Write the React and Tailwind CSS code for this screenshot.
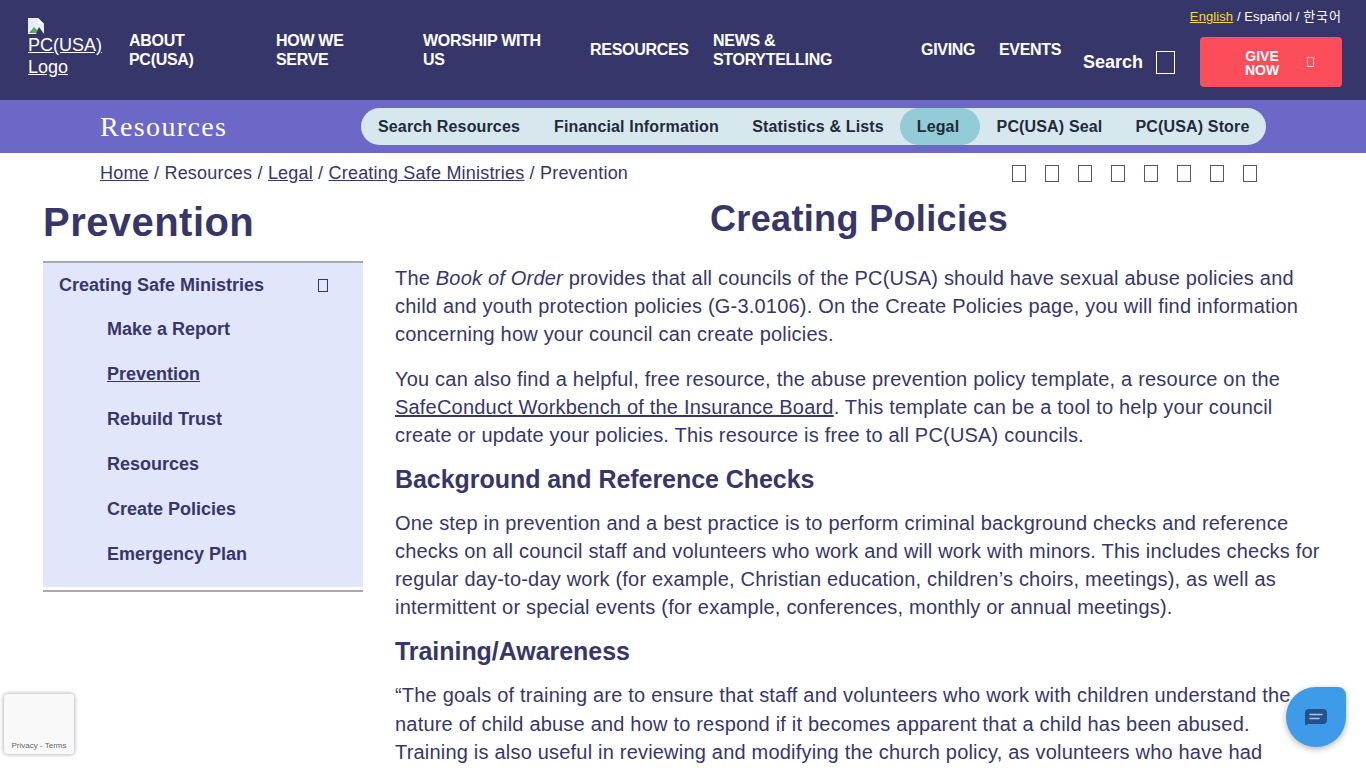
const navItems = [
  { label: ['ABOUT', 'PC(USA)'], width: 'w-[147px]' },
  { label: ['HOW WE', 'SERVE'], width: 'w-[147px]' },
  { label: ['WORSHIP WITH', 'US'], width: 'w-[167px]' },
  { label: ['RESOURCES'], width: 'w-[123px]' },
  { label: ['NEWS &', 'STORYTELLING'], width: 'w-[208px]' },
  { label: ['GIVING'], width: 'w-[78px]' },
  { label: ['EVENTS'], width: 'w-[85px]' },
];

const subNav = [
  { label: 'Search Resources', width: 'w-[176px]' },
  { label: 'Financial Information', width: 'w-[199px]' },
  { label: 'Statistics & Lists', width: 'w-[164px]' },
  { label: 'Legal', width: 'w-[80px]', active: true },
  { label: 'PC(USA) Seal', width: 'w-[139px]' },
  { label: 'PC(USA) Store', width: 'w-[147px]' },
];

const sideLinks = ['Make a Report', 'Prevention', 'Rebuild Trust', 'Resources', 'Create Policies', 'Emergency Plan'];

function Tofu({ className }) {
  return <span className={`inline-block shrink-0 border ${className}`} />;
}

function BrokenImage() {
  return (
    <svg width="16" height="16" viewBox="0 0 16 16" className="block">
      <path d="M0 0h10l6 6v10H0z" fill="#e8eef7" />
      <path d="M10 0l6 6h-6z" fill="#ffffff" />
      <path d="M1 15l5-6 3 3 3-2v5z" fill="#5fa55a" />
      <path d="M11 9l5 7H8z" fill="#37366b" />
    </svg>
  );
}

export default function App() {
  return (
    <div className="relative h-[768px] overflow-hidden bg-white font-['Liberation_Sans',Arial,sans-serif] text-[#37366b]">
      <header className="flex h-[100px] bg-[#37366b] text-white">
        <a href="#" className="ml-[28px] mt-[18px] w-[101px] text-[18px] leading-[22px] underline">
          <BrokenImage />
          <span className="block">PC(USA)</span>
          <span className="block">Logo</span>
        </a>
        <nav className="flex h-full items-center pb-[2px]">
          {navItems.map((item) => (
            <div
              key={item.label[0]}
              className={`${item.width} text-[16px] font-bold leading-[19px] tracking-[-0.3px] ${item.label.length > 1 ? 'mt-[2px]' : ''}`}
            >
              {item.label.map((line) => (
                <div key={line}>{line}</div>
              ))}
            </div>
          ))}
        </nav>
        <div className="ml-[-1px] flex flex-col">
          <div className="mt-[8px] h-[29px] text-right text-[13px] leading-[16px] tracking-[0.1px]">
            <a href="#" className="text-[#f5d742] underline">English</a>
            {' / Español / '}
            <span className="font-['Noto_Sans_CJK_KR',sans-serif] tracking-[1px]">한국어</span>
          </div>
          <div className="flex items-center">
            <span className="text-[18px] font-bold">Search</span>
            <Tofu className="ml-[13px] h-[23px] w-[19px] border-white" />
            <a href="#" className="ml-[25px] flex h-[50px] w-[142px] items-center rounded-[4px] bg-[#fb4d5a] text-[14px] font-bold leading-[14px]">
              <span className="ml-[40px] w-[44px] pt-[1px] text-center">GIVE<br />NOW</span>
              <Tofu className="ml-[23px] h-[10px] w-[7px] border-[#ffd5d8]" />
            </a>
          </div>
        </div>
      </header>

      <div className="flex h-[53px] items-center bg-[#6b68c8]">
        <div className="ml-[100px] w-[261px] font-['Liberation_Serif',serif] text-[28px] tracking-[1.35px] text-white">Resources</div>
        <div className="flex h-[37px] w-[905px] rounded-full bg-[#d7e7ee] text-[16px] font-bold tracking-[0.15px] text-[#1f2a3a]">
          {subNav.map((item) => (
            <a
              key={item.label}
              href="#"
              className={`flex items-center justify-center rounded-full ${item.width} ${item.active ? 'bg-[#93cbd6] pr-[4px]' : ''}`}
            >
              {item.label}
            </a>
          ))}
        </div>
      </div>

      <div className="flex h-[40px] items-center text-[18px] tracking-[0.2px]">
        <div className="ml-[100px] w-[912px]">
          <a href="#" className="underline">Home</a>
          {' / Resources / '}
          <a href="#" className="underline">Legal</a>
          {' / '}
          <a href="#" className="underline">Creating Safe Ministries</a>
          {' / Prevention'}
        </div>
        <div className="flex gap-[19px]">
          {[0, 1, 2, 3, 4, 5, 6, 7].map((n) => (
            <Tofu key={n} className="h-[17px] w-[14px] border-[#55556f]" />
          ))}
        </div>
      </div>

      <div className="flex">
        <aside className="ml-[43px] w-[320px] shrink-0">
          <h1 className="mt-[5px] h-[63px] text-[40px] font-bold leading-[48px] tracking-[0.45px]">Prevention</h1>
          <div className="h-[331px] border-y-2 border-[#a9a9b3] bg-[#e2e6fb] shadow-[inset_0_-3px_0_#ffffff]">
            <div className="flex h-[44px] items-center pl-[16px] pr-[35px] text-[18px] font-bold">
              <span className="flex-1">Creating Safe Ministries</span>
              <Tofu className="h-[13px] w-[10px] border-[#37366b]" />
            </div>
            <ul className="pl-[64px] text-[18px] font-bold">
              {sideLinks.map((link) => (
                <li key={link} className={`flex h-[45px] items-center ${link === 'Prevention' ? 'underline' : ''}`}>
                  {link}
                </li>
              ))}
            </ul>
          </div>
        </aside>

        <main className="ml-[32px] w-[928px] text-[20px] leading-[28px] tracking-[0.2px]">
          <h2 className="mb-[23px] mt-[4px] text-center text-[36px] font-bold leading-[44px] tracking-[0.35px]">Creating Policies</h2>
          <p className="mb-[17px]">
            The <em>Book of Order</em> provides that all councils of the PC(USA) should have sexual abuse policies and
            child and youth protection policies (G-3.0106). On the Create Policies page, you will find information
            concerning how your council can create policies.
          </p>
          <p className="mb-[15px]">
            You can also find a helpful, free resource, the abuse prevention policy template, a resource on the{' '}
            <a href="#" className="underline">SafeConduct Workbench of the Insurance Board</a>. This template can be a
            tool to help your council create or update your policies. This resource is free to all PC(USA) councils.
          </p>
          <h3 className="mb-[15px] text-[25px] font-bold leading-[30px] tracking-[-0.05px]">Background and Reference Checks</h3>
          <p className="mb-[15px]">
            One step in prevention and a best practice is to perform criminal background checks and reference checks on
            all council staff and volunteers who work and will work with minors. This includes checks for regular
            day-to-day work (for example, Christian education, children’s choirs, meetings), as well as intermittent or
            special events (for example, conferences, monthly or annual meetings).
          </p>
          <h3 className="mb-[15px] text-[25px] font-bold leading-[30px] tracking-[-0.05px]">Training/Awareness</h3>
          <p className="leading-[28.5px]">
            “The goals of training are to ensure that staff and volunteers who work with children understand the nature
            of child abuse and how to respond if it becomes apparent that a child has been abused. Training is also
            useful in reviewing and modifying the church policy, as volunteers who have had
          </p>
        </main>
      </div>

      <div className="absolute left-[4px] top-[694px] flex h-[60px] w-[70px] items-end justify-center rounded-[3px] bg-[#f9f9f9] pb-[3px] text-[8px] leading-[10px] text-[#666] shadow-[0_0_4px_rgba(0,0,0,0.4)]">
        Privacy - Terms
      </div>

      <div className="absolute left-[1286px] top-[687px] flex h-[60px] w-[60px] items-center justify-center rounded-[30px] rounded-tr-[8px] bg-[#3d9be9] shadow-[0_2px_6px_rgba(0,0,0,0.3)]">
        <svg width="24" height="18" viewBox="0 0 24 18">
          <path d="M5 1h14a4 4 0 0 1 4 4v7a4 4 0 0 1-4 4H4l-3 1.500V5a4 4 0 0 1 4-4z" fill="#24508c" />
          <path d="M6 6.500h12M6 10.500h9" stroke="#a8c7e8" strokeWidth="1.500" strokeLinecap="round" />
        </svg>
      </div>
    </div>
  );
}
